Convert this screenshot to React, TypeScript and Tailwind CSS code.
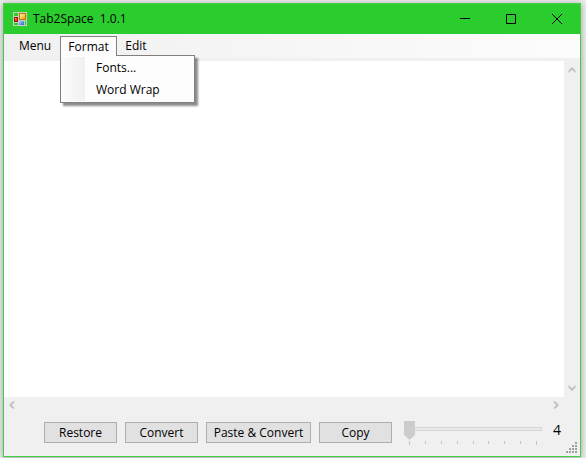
import { useState } from "react";

type Dir = "up" | "down" | "left" | "right";

const chevrons: Record<Dir, string> = {
  up: "M4 1 L7.5 4.5 V7 L4 3.8 L.5 7 V4.5z",
  down: "M4 7 L7.5 3.5 V1 L4 4.2 L.5 1 V3.5z",
  left: "M1 4 L4.5 .5 H7 L3.8 4 L7 7.5 H4.5z",
  right: "M7 4 L3.5 .5 H1 L4.2 4 L1 7.5 H3.5z",
};

function ScrollArrow({ dir }: { dir: Dir }) {
  return (
    <button type="button" aria-label={`Scroll ${dir}`} className="flex size-4 items-center justify-center text-[#bfbfbf]">
      <svg viewBox="0 0 8 8" className="size-2" fill="currentColor">
        <path d={chevrons[dir]} />
      </svg>
    </button>
  );
}

function AppIcon() {
  return (
    <svg viewBox="0 0 14 14" className="size-3.5 shrink-0" shapeRendering="crispEdges">
      <defs>
        <linearGradient id="gold" x1="0" y1="0" x2="1" y2="1">
          <stop offset="0" stopColor="#fff3a8" />
          <stop offset="1" stopColor="#f0a400" />
        </linearGradient>
        <linearGradient id="blue" x1="0" y1="0" x2="1" y2="1">
          <stop offset="0" stopColor="#a9cdfa" />
          <stop offset="1" stopColor="#2a66d8" />
        </linearGradient>
      </defs>
      <path d="M0 0h14v14H0z" fill="#c8cdc2" />
      <path d="M1 1h4v3H1zM1 11h4v2H1z" fill="#2bcd2e" />
      <path d="M6 1h7v7H6z" fill="#b87908" />
      <path d="M7 2h5v5H7z" fill="url(#gold)" />
      <path d="M1 5h4v5H1z" fill="#96150c" />
      <path d="M2 6h2v3H2z" fill="#e5472f" />
      <path d="M2 6h1v1H2z" fill="#ffb09d" />
      <path d="M6 9h5v4H6z" fill="url(#blue)" />
      <path d="M12 9h1v4h-1z" fill="#2bcd2e" />
    </svg>
  );
}

function TitleBar() {
  const control = "flex h-full w-[46px] items-center justify-center";
  return (
    <header className="flex h-[30px] shrink-0 items-center bg-[#2bcd2e] pl-[9px]">
      <AppIcon />
      <h1 className="ml-1.5 grow whitespace-pre">Tab2Space  1.0.1</h1>
      <button type="button" aria-label="Minimize" className={control}>
        <svg viewBox="0 0 10 10" className="size-2.5" stroke="#000">
          <path d="M0 4.5h10" />
        </svg>
      </button>
      <button type="button" aria-label="Maximize" className={control}>
        <svg viewBox="0 0 10 10" className="size-2.5" fill="none" stroke="#000">
          <path d="M.5 .5h9v9h-9z" />
        </svg>
      </button>
      <button type="button" aria-label="Close" className={control}>
        <svg viewBox="0 0 10 10" className="size-2.5" stroke="#000">
          <path d="M0 0l10 10M10 0L0 10" />
        </svg>
      </button>
    </header>
  );
}

function MenuBar({ onWrap }: { onWrap: () => void }) {
  const [open, setOpen] = useState(true);
  return (
    <nav className="flex h-6 shrink-0 bg-linear-to-r from-[#f0f0f0] to-[#fcfcfc] pt-0.5 pl-1.5">
      <button type="button" className="h-5 w-[50px]">Menu</button>
      <div className="relative">
        <button
          type="button"
          aria-expanded={open}
          onClick={() => setOpen(!open)}
          className="relative z-20 h-5 w-[57px] border border-b-0 border-[#808080] bg-[#fcfcfc]"
        >
          Format
        </button>
        {open && (
          <div className="absolute top-[19px] left-0 z-10 w-[135px] border border-[#808080] bg-[#fdfdfd] p-px shadow-[3px_3px_2px_0px_rgba(0,0,0,0.45)]">
            <div className="flex flex-col bg-linear-to-r from-[#fcfcfc] from-0% via-[#f0f0f0] via-[23px] to-[#fdfdfd] to-[23px]">
              <button type="button" className="h-[22px] pl-[34px] text-left">Fonts...</button>
              <button type="button" onClick={onWrap} className="h-[22px] pl-[34px] text-left">Word Wrap</button>
            </div>
          </div>
        )}
      </div>
      <button type="button" className="h-5 w-[38px]">Edit</button>
    </nav>
  );
}

function Ticks() {
  return (
    <div className="flex justify-between px-[5px] pt-1">
      {Array.from({ length: 9 }, (_, i) => (
        <span key={i} className="h-[3px] w-px bg-[#c4c4c4] first:h-1 last:h-1" />
      ))}
    </div>
  );
}

function ResizeGrip() {
  return (
    <svg viewBox="0 0 11 11" className="size-[11px] shrink-0 self-end" fill="#a0a0a0" shapeRendering="crispEdges">
      <path d="M9 0h2v2H9zM6 3h2v2H6zM9 3h2v2H9zM3 6h2v2H3zM6 6h2v2H6zM9 6h2v2H9zM0 9h2v2H0zM3 9h2v2H3zM6 9h2v2H6zM9 9h2v2H9z" />
    </svg>
  );
}

export default function App() {
  const [size, setSize] = useState(4);
  const [wrap, setWrap] = useState(false);
  const action = "h-[21px] border border-[#adadad] bg-[#e1e1e1] text-center leading-[19px]";
  return (
    <div className="flex h-screen bg-[#ebebeb] px-[3px] pt-[3px] pr-[5px] pb-px font-['Open_Sans','Noto_Sans',sans-serif] text-xs text-black">
      <main className="flex min-w-0 grow flex-col border border-[#3fd142] bg-[#f0f0f0] shadow-[0_1px_6px_rgba(0,0,0,0.35)]">
        <TitleBar />
        <MenuBar onWrap={() => setWrap(!wrap)} />
        <div className="mt-[3px] flex grow">
          <textarea
            aria-label="Text"
            wrap={wrap ? "soft" : "off"}
            className="min-w-0 grow resize-none overflow-hidden bg-white outline-none"
          />
          <div className="flex w-4 flex-col justify-between pt-px pb-px">
            <ScrollArrow dir="up" />
            <ScrollArrow dir="down" />
          </div>
        </div>
        <div className="mr-4 flex h-4 shrink-0 justify-between">
          <ScrollArrow dir="left" />
          <ScrollArrow dir="right" />
        </div>
        <footer className="flex h-[43px] shrink-0 items-start pt-2 pr-[3px] pl-10">
          <div className="flex gap-2 pt-px">
            <button type="button" className={`${action} w-[73px]`}>Restore</button>
            <button type="button" className={`${action} w-[73px]`}>Convert</button>
            <button type="button" className={`${action} w-[105px]`}>Paste &amp; Convert</button>
            <button type="button" className={`${action} w-[73px]`}>Copy</button>
          </div>
          <div className="ml-3 min-w-0 grow">
            <input
              id="tab-size"
              type="range"
              aria-label="Tab size"
              min={4}
              max={12}
              value={size}
              onChange={(e) => setSize(Number(e.target.value))}
              className="block h-4 w-full appearance-none bg-transparent outline-none [&::-webkit-slider-runnable-track]:h-1 [&::-webkit-slider-runnable-track]:border [&::-webkit-slider-runnable-track]:border-[#d6d6d6] [&::-webkit-slider-runnable-track]:bg-[#e7eaea] [&::-webkit-slider-thumb]:-mt-[7px] [&::-webkit-slider-thumb]:-ml-px [&::-webkit-slider-thumb]:h-[19px] [&::-webkit-slider-thumb]:w-[11px] [&::-webkit-slider-thumb]:appearance-none [&::-webkit-slider-thumb]:bg-[#cccccc] [&::-webkit-slider-thumb]:[clip-path:polygon(0_0,100%_0,100%_74%,50%_100%,0_74%)]"
            />
            <Ticks />
          </div>
          <output htmlFor="tab-size" className="ml-[11px] w-[13px] text-sm leading-[18px]">{size}</output>
          <div className="flex h-8 shrink-0">
            <ResizeGrip />
          </div>
        </footer>
      </main>
    </div>
  );
}
